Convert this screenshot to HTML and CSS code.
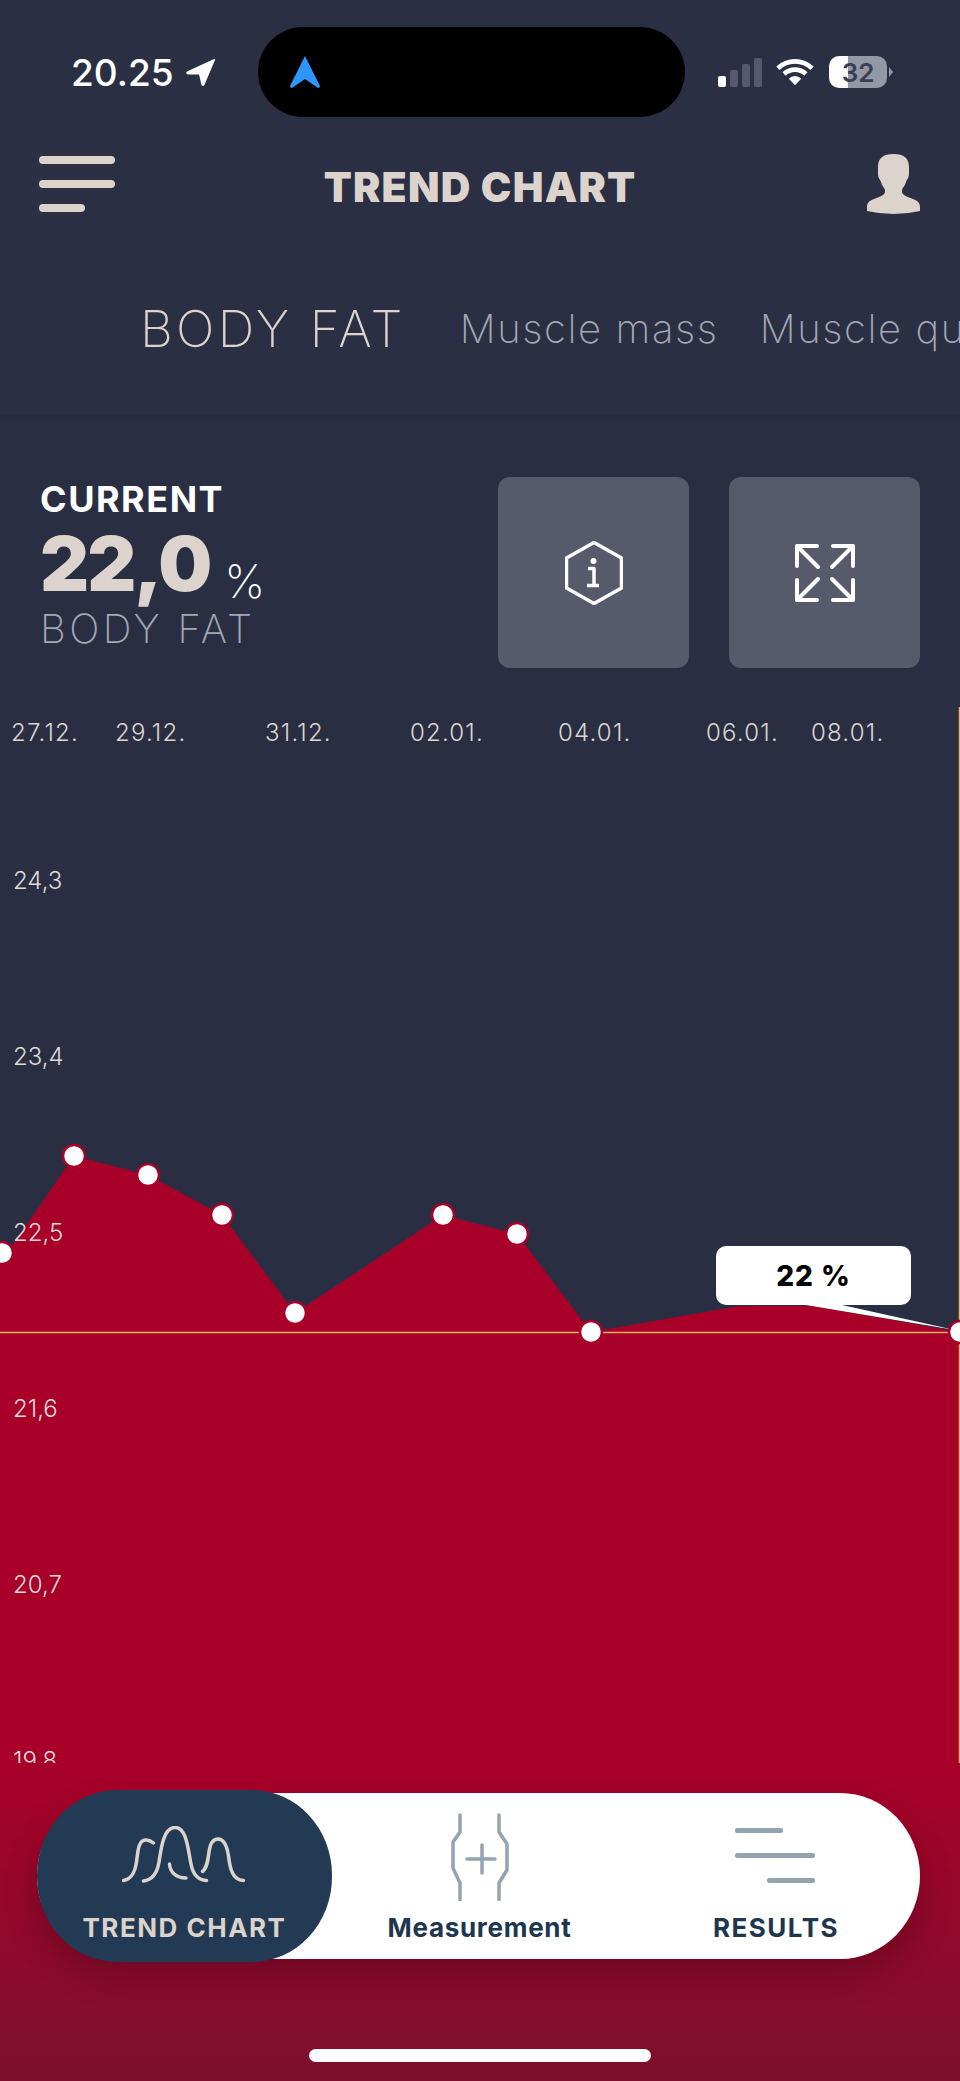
FILE: index.html
```html
<!DOCTYPE html>
<html lang="en">
<head>
    <meta charset="UTF-8">
    <meta name="viewport" content="width=device-width, initial-scale=1.0">
    <title>Trend Chart</title>
    <link rel="stylesheet" href="styles.css">
</head>
<body>
    <header class="page-head">
        <div class="status-bar">
            <div class="status-time">
                <span>20.25</span>
                <svg class="loc-arrow" viewBox="0 0 32 32"><path d="M2 15 L30 2 Q31.500 1.500 31 3 L20 29 Q18.500 31 17 29 L14.500 18 L3 18 Q0 16.500 2 15 Z" fill="#fff"/></svg>
            </div>
            <div class="island">
                <svg class="nav-arrow" viewBox="0 0 32 34"><path d="M16 1 L31 31 Q31 33 29 33 L16 24 L3 33 Q1 33 1 31 Z" fill="#2e96fb"/></svg>
            </div>
            <div class="status-icons">
                <div class="signal">
                    <i class="bar bar-on bar-1"></i>
                    <i class="bar bar-2"></i>
                    <i class="bar bar-3"></i>
                    <i class="bar bar-4"></i>
                </div>
                <svg class="wifi" viewBox="0 0 40 30">
                    <path d="M2 11 A26 26 0 0 1 38 11 M8.500 17 A17 17 0 0 1 31.500 17" fill="none" stroke="#fff" stroke-width="5"/>
                    <path d="M13.500 22 A9 9 0 0 1 26.500 22 L20 29 Z" fill="#fff"/>
                </svg>
                <div class="battery"><span>32</span></div>
                <i class="battery-cap"></i>
            </div>
        </div>

        <nav class="top-nav">
            <div class="burger">
                <i></i>
                <i></i>
                <i class="short"></i>
            </div>
            <h1>TREND CHART</h1>
            <svg class="person" viewBox="0 0 53 60">
                <path d="M26.500 0 C16 0 11 4 11 13 L11 20 C11 24 13 25 14 28 C15 32 17 33 18 36 V38 C18 41 12 43 7 45 C2 47 0 49 0 53 V57 Q13 60 26.500 60 Q40 60 53 57 V53 C53 49 51 47 46 45 C41 43 35 41 35 38 V36 C36 33 38 32 39 28 C40 25 42 24 42 20 L42 13 C42 4 37 0 26.500 0 Z" fill="#dbd3cc"/>
            </svg>
        </nav>

        <div class="metric-tabs">
            <span class="metric-tab active">BODY FAT</span>
            <span class="metric-tab">Muscle mass</span>
            <span class="metric-tab">Muscle quality</span>
        </div>
    </header>

    <section class="summary">
        <div class="summary-text">
            <div class="summary-label">CURRENT</div>
            <div class="summary-value">22,0<small>%</small></div>
            <div class="summary-name">BODY FAT</div>
        </div>
        <div class="summary-btns">
            <button class="square-btn">
                <svg class="icon-info" viewBox="0 0 58 64" fill="none" stroke="#fff" stroke-linejoin="round">
                    <path d="M29 1.500 L56.500 17 V47 L29 62.500 L1.500 47 V17 Z" stroke-width="3.500"/>
                    <path d="M23 27.500 H29 V44 M22 44.500 H34" stroke-width="3.500"/>
                    <circle cx="28.500" cy="20" r="3" fill="#fff" stroke="none"/>
                </svg>
            </button>
            <button class="square-btn">
                <svg class="icon-expand" viewBox="0 0 60 58" fill="none" stroke="#fff" stroke-width="4" stroke-linecap="round" stroke-linejoin="round">
                    <path d="M2 22 V2 H22 M2 2 L23 23"/>
                    <path d="M38 2 H58 V22 M58 2 L37 23"/>
                    <path d="M2 36 V56 H22 M2 56 L23 35"/>
                    <path d="M38 56 H58 V36 M58 56 L37 35"/>
                </svg>
            </button>
        </div>
    </section>

    <section class="chart">
        <svg class="chart-svg" viewBox="0 0 960 1063" preserveAspectRatio="none">
            <polygon class="chart-area" points="0,1063 0,563 74,456 148,475 222,515 295,613 443,515 517,534 591,632 739,606 813,606 960,632 960,1063"/>
            <line class="chart-now" x1="0" y1="632.500" x2="960" y2="632.500"/>
            <line class="chart-now" x1="959.500" y1="7" x2="959.500" y2="1063"/>
            <polygon class="chart-pointer" points="806,605 842,605 955,630"/>
            <circle class="chart-dot" cx="2" cy="553" r="11"/>
            <circle class="chart-dot" cx="74" cy="456" r="11"/>
            <circle class="chart-dot" cx="148" cy="475" r="11"/>
            <circle class="chart-dot" cx="222" cy="515" r="11"/>
            <circle class="chart-dot" cx="295" cy="613" r="11"/>
            <circle class="chart-dot" cx="443" cy="515" r="11"/>
            <circle class="chart-dot" cx="517" cy="534" r="11"/>
            <circle class="chart-dot" cx="591" cy="632" r="11"/>
            <circle class="chart-dot" cx="960" cy="632" r="11"/>
        </svg>

        <span class="date" style="left:11px">27.12.</span>
        <span class="date" style="left:115px">29.12.</span>
        <span class="date" style="left:265px">31.12.</span>
        <span class="date" style="left:410px">02.01.</span>
        <span class="date" style="left:558px">04.01.</span>
        <span class="date" style="left:706px">06.01.</span>
        <span class="date" style="left:811px">08.01.</span>

        <span class="tick" style="top:167px">24,3</span>
        <span class="tick" style="top:343px">23,4</span>
        <span class="tick" style="top:519px">22,5</span>
        <span class="tick" style="top:695px">21,6</span>
        <span class="tick" style="top:871px">20,7</span>
        <span class="tick" style="top:1047px">19,8</span>

        <div class="tooltip">22 %</div>
    </section>

    <footer class="page-foot">
        <div class="tabbar">
            <div class="tabbar-item active">
                <svg class="icon-trend" viewBox="0 0 124 58" fill="none" stroke="#dbd3cc" stroke-width="3.500" stroke-linecap="round">
                    <path d="M1.500 54.500 C10 53 13 46 14.500 36 C16 26 16 15 23 14 C26 13.500 29 15 31.500 17"/>
                    <path d="M21.500 55 C30 54 35 48 37 36 C39 24 41 1.500 53 1.500 C65 1.500 66 24 69 38 C71 49 76 54 84.500 54.500"/>
                    <path d="M47.500 38 C48 46 54 52 64 52"/>
                    <path d="M80.500 45.500 C85 42 86 34 87 26 C88 18 90 13 96 13 C102 13 105 20 106.500 30 C108 42 110 54 121.500 54.500"/>
                </svg>
                <span>TREND CHART</span>
            </div>
            <div class="tabbar-item tabbar-measure">
                <svg class="icon-measure" viewBox="0 0 58 88" fill="none" stroke="#94a3b0" stroke-width="3.500" stroke-linecap="round" stroke-linejoin="round">
                    <path d="M9 2 V19 L2 29 V55 L9 70 V87"/>
                    <path d="M48 2 V19 L56 31 V57 L48 70 V87"/>
                    <path d="M16 46 H44 M31 32 V60"/>
                </svg>
                <span>Measurement</span>
            </div>
            <div class="tabbar-item tabbar-results">
                <div class="icon-results">
                    <i class="r-1"></i>
                    <i class="r-2"></i>
                    <i class="r-3"></i>
                </div>
                <span>RESULTS</span>
            </div>
        </div>
        <div class="home-bar"></div>
    </footer>
</body>
</html>
```

FILE: styles.css
```css
* {
    box-sizing: border-box;
}
html, body {
    margin: 0;
    padding: 0;
}
body {
    width: 960px;
    height: 2081px;
    overflow: hidden;
    display: flex;
    flex-direction: column;
    font-family: Inter, "Liberation Sans", sans-serif;
    background-color: #2a2e42;
}
i {
    display: block;
}

/* header */
.page-head {
    height: 415px;
    padding-top: 27px;
    overflow: hidden;
    flex-shrink: 0;
    background-color: #2b2f43;
    box-shadow: 0 2px 5px rgba(0, 0, 0, 0.12);
}
.status-bar {
    display: flex;
    align-items: center;
    height: 90px;
    padding-left: 71px;
}
.status-time {
    display: flex;
    align-items: center;
    gap: 11px;
    width: 187px;
    font-size: 37px;
    font-weight: 500;
    color: #fff;
}
.loc-arrow {
    width: 31px;
    height: 31px;
}
.island {
    width: 427px;
    height: 90px;
    border-radius: 45px;
    background-color: #000;
    display: flex;
    align-items: center;
    padding-left: 31px;
}
.nav-arrow {
    width: 32px;
    height: 34px;
}
.status-icons {
    display: flex;
    align-items: center;
    margin-left: 33px;
}
.signal {
    display: flex;
    align-items: flex-end;
    gap: 4px;
    height: 30px;
}
.bar {
    width: 8px;
    border-radius: 2px;
    background-color: #55596b;
}
.bar-on {
    background-color: #fff;
}
.bar-1 { height: 11px; }
.bar-2 { height: 17px; }
.bar-3 { height: 23px; }
.bar-4 { height: 29px; }
.wifi {
    width: 38px;
    height: 30px;
    margin-left: 14px;
}
.battery {
    width: 58px;
    height: 32px;
    margin-left: 15px;
    border-radius: 10px;
    background: linear-gradient(90deg, #fff 0 32%, #9497a4 32% 100%);
    display: flex;
    align-items: center;
    justify-content: center;
    font-size: 26px;
    font-weight: 600;
    color: #3a3e54;
}
.battery-cap {
    width: 0;
    height: 0;
    margin-left: 2px;
    border-left: 4px solid #9497a4;
    border-top: 5px solid transparent;
    border-bottom: 5px solid transparent;
}

.top-nav {
    margin: 36px 40px 0 39px;
    display: flex;
    align-items: center;
    justify-content: space-between;
    height: 62px;
}
.burger {
    display: flex;
    flex-direction: column;
    gap: 16px;
    width: 76px;
}
.burger i {
    height: 8px;
    border-radius: 4px;
    background-color: #dbd3cc;
}
.burger .short {
    width: 46px;
}
.top-nav h1 {
    margin: 5px 22px 0 0;
    font-size: 41px;
    font-weight: 900;
    letter-spacing: 1.2px;
    color: #dbd3cc;
}
.person {
    width: 53px;
    height: 60px;
}

.metric-tabs {
    margin-top: 83px;
    padding-left: 140px;
    height: 60px;
    display: flex;
    align-items: center;
    white-space: nowrap;
}
.metric-tab {
    flex-shrink: 0;
    margin-right: 41px;
    font-size: 40px;
    font-weight: 200;
    letter-spacing: 1.6px;
    color: #a3a7b4;
}
.metric-tab.active {
    margin-right: 54px;
    font-size: 51px;
    letter-spacing: 3.2px;
    color: #dbd3cc;
}

/* current value */
.summary {
    height: 285px;
    flex-shrink: 0;
    padding: 62px 40px 0;
    display: flex;
    justify-content: space-between;
}
.summary-text {
    padding-top: 4px;
}
.summary-label {
    font-size: 36px;
    font-weight: 700;
    line-height: 36px;
    letter-spacing: 1.5px;
    color: #fff;
}
.summary-value {
    margin-top: 14px;
    font-size: 76px;
    font-weight: 900;
    line-height: 64px;
    letter-spacing: -2px;
    color: #dbd3cc;
}
.summary-value small {
    margin-left: 14px;
    font-size: 46px;
    font-weight: 200;
    line-height: 0;
    vertical-align: -7px;
    letter-spacing: 0;
    color: #fff;
}
.summary-name {
    margin-top: 14px;
    font-size: 40px;
    font-weight: 200;
    line-height: 40px;
    letter-spacing: 3.4px;
    color: #a3a7b4;
}
.summary-btns {
    display: flex;
    gap: 40px;
}
.square-btn {
    width: 191px;
    height: 191px;
    padding: 0;
    border: 0;
    border-radius: 12px;
    background-color: #565a6b;
    display: flex;
    align-items: center;
    justify-content: center;
}
.icon-info {
    width: 58px;
    height: 64px;
}
.icon-expand {
    width: 60px;
    height: 58px;
}

/* chart, the marks are placed on a free canvas */
.chart {
    position: relative;
    height: 1063px;
    flex-shrink: 0;
    overflow: hidden;
}
.chart-svg {
    position: absolute;
    top: 0;
    left: 0;
    width: 960px;
    height: 1063px;
}
.chart-area {
    fill: #a80028;
}
.chart-now {
    stroke: #f0b060;
    stroke-width: 1.500;
}
.chart-pointer {
    fill: #fff;
}
.chart-dot {
    fill: #fff;
    stroke: #a80028;
    stroke-width: 2.500;
}
.date {
    position: absolute;
    top: 19px;
    font-size: 24px;
    font-weight: 300;
    line-height: 28px;
    letter-spacing: 1.2px;
    color: #dcd5cf;
}
.tick {
    position: absolute;
    left: 13px;
    font-size: 24px;
    font-weight: 300;
    line-height: 28px;
    color: #dddbdc;
}
.tooltip {
    position: absolute;
    left: 716px;
    top: 546px;
    width: 195px;
    height: 59px;
    border-radius: 10px;
    background-color: #fff;
    display: flex;
    align-items: center;
    justify-content: center;
    font-size: 28px;
    font-weight: 800;
    letter-spacing: 1px;
    color: #000;
}

/* bottom tab bar */
.page-foot {
    flex: 1;
    padding: 30px 40px 0 37px;
    display: flex;
    flex-direction: column;
    background: linear-gradient(180deg, #a80028 0%, #880c2d 75%, #7c0f2c 100%);
}
.tabbar {
    display: grid;
    grid-template-columns: 295px 295px 293px;
    height: 166px;
    border-radius: 80px / 83px;
    background-color: #fff;
    box-shadow: 0 16px 32px rgba(40, 0, 10, 0.28);
}
.tabbar-item {
    display: flex;
    flex-direction: column;
    align-items: center;
    justify-content: flex-end;
    padding-bottom: 16px;
    font-size: 26px;
    font-weight: 700;
    letter-spacing: 1.5px;
    color: #20364f;
}
.tabbar-measure {
    letter-spacing: 0.7px;
}
.tabbar-results {
    padding-left: 5px;
}
.tabbar-item span {
    margin-top: 12px;
}
.tabbar-item.active {
    margin: -3px 0;
    padding-bottom: 19px;
    border-radius: 80px / 85px;
    background-color: #233a54;
    color: #dbd3cc;
}
.icon-trend {
    width: 124px;
    height: 58px;
    margin: 0 2px 16px 0;
}
.icon-measure {
    width: 58px;
    height: 88px;
    margin: 0 0 -1px 1px;
}
.icon-results {
    display: flex;
    flex-direction: column;
    gap: 20px;
    width: 80px;
    margin: 0 2px 17px 0;
}
.icon-results i {
    height: 5px;
    border-radius: 2px;
    background-color: #94a3b0;
}
.icon-results .r-1 {
    width: 48px;
}
.icon-results .r-3 {
    width: 48px;
    margin-left: 32px;
}
.home-bar {
    width: 342px;
    height: 13px;
    margin: 90px 0 0 272px;
    border-radius: 7px;
    background-color: #fff;
}
```
